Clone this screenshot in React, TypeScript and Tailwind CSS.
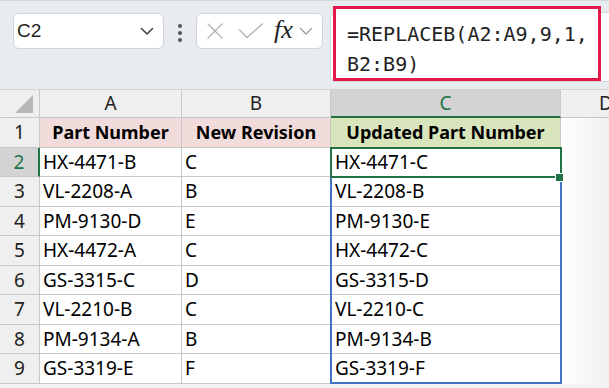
import React from "react";

const data: [string, string, string][] = [
  ["HX-4471-B", "C", "HX-4471-C"],
  ["VL-2208-A", "B", "VL-2208-B"],
  ["PM-9130-D", "E", "PM-9130-E"],
  ["HX-4472-A", "C", "HX-4472-C"],
  ["GS-3315-C", "D", "GS-3315-D"],
  ["VL-2210-B", "C", "VL-2210-C"],
  ["PM-9134-A", "B", "PM-9134-B"],
  ["GS-3319-E", "F", "GS-3319-F"],
];

const sheetFont = { fontFamily: '"Noto Sans", "Open Sans", sans-serif' };

export default function App() {
  return (
    <div className="w-[609px] h-[388px] overflow-hidden bg-[#f3f3f3] relative" style={sheetFont}>
      {/* Toolbar */}
      <div className="relative h-[90px] bg-[#e9ecef] border-t border-[#d6d9dc] border-b border-b-[#d4d4d4]">
        {/* Name box */}
        <div className="absolute left-[13px] top-[12px] w-[151px] h-[36px] bg-white border border-[#d3d5d8] rounded-[6px] flex items-center pl-[3px] pr-[8px]">
          <span className="text-[19px] text-[#1f1f1f] flex-1" style={{ fontFamily: '"Liberation Sans", Arial, sans-serif' }}>C2</span>
          <svg width="14" height="9" viewBox="0 0 14 9" className="mr-[1px]">
            <path d="M1.5 1.5 L7 7 L12.5 1.5" fill="none" stroke="#444" strokeWidth="1.6" strokeLinecap="round" strokeLinejoin="round" />
          </svg>
        </div>
        {/* dots */}
        <div className="absolute left-[178px] top-[23px] flex flex-col gap-[3px]">
          <div className="w-[4px] h-[4px] rounded-full bg-[#555]" />
          <div className="w-[4px] h-[4px] rounded-full bg-[#555]" />
          <div className="w-[4px] h-[4px] rounded-full bg-[#555]" />
        </div>
        {/* fx box */}
        <div className="absolute left-[196px] top-[12px] w-[127px] h-[36px] bg-white border border-[#d3d5d8] rounded-[6px] flex items-center">
          <svg width="18" height="18" viewBox="0 0 18 18" className="ml-[9px]">
            <path d="M2 2 L16 16 M16 2 L2 16" stroke="#b4b4b4" strokeWidth="1.4" strokeLinecap="round" />
          </svg>
          <svg width="26" height="18" viewBox="0 0 26 18" className="ml-[14px]">
            <path d="M1.5 8 L9 15.5 L24.5 2" fill="none" stroke="#b4b4b4" strokeWidth="1.4" strokeLinecap="round" strokeLinejoin="round" />
          </svg>
          <span className="ml-[10px] text-[26px] leading-none italic text-[#222] -mt-[2px]" style={{ fontFamily: '"Liberation Serif", "Times New Roman", serif' }}>fx</span>
          <svg width="14" height="9" viewBox="0 0 14 9" className="ml-[6px]">
            <path d="M1.5 1.5 L7 7 L12.5 1.5" fill="none" stroke="#9a9a9a" strokeWidth="1.3" strokeLinecap="round" strokeLinejoin="round" />
          </svg>
        </div>
        {/* formula box */}
        <div className="absolute left-[330px] top-[11px] w-[290px] h-[70px] bg-white border border-[#d3d5d8] rounded-[6px]" />
        <div
          className="absolute left-[333px] top-[5px] w-[268px] h-[75px] bg-white border-[3px] border-[#e2194a] pl-[11px] pt-[10px] text-[20px] leading-[30px] text-[#222]"
          style={{ fontFamily: '"DejaVu Sans Mono", "Liberation Mono", monospace' }}
        >
          <div>=REPLACEB(A2:A9,9,1,</div>
          <div>B2:B9)</div>
        </div>
      </div>

      {/* Grid */}
      <div className="relative">
        {/* header row */}
        <div className="flex h-[28px] text-[19px] text-[#222]">
          <div className="w-[40px] shrink-0 bg-[#efefef] border-r border-b border-[#c8c8c8] relative">
            <svg width="20" height="20" viewBox="0 0 20 20" className="absolute right-[5px] bottom-[3px]">
              <path d="M19 1 L19 19 L1 19 Z" fill="#b7b7b7" />
            </svg>
          </div>
          <div className="w-[142px] shrink-0 bg-[#efefef] border-r border-b border-[#c8c8c8] flex items-center justify-center">A</div>
          <div className="w-[149px] shrink-0 bg-[#efefef] border-r border-b border-[#c8c8c8] flex items-center justify-center">B</div>
          <div className="w-[230px] shrink-0 bg-[#d3d3d3] border-r border-[#c8c8c8] border-b-2 border-b-[#217346] flex items-center justify-center text-[#217346]">C</div>
          <div className="flex-1 bg-[#efefef] border-b border-[#c8c8c8] flex items-center pl-[38px]">D</div>
        </div>
        {/* row 1 */}
        <div className="flex h-[29.5px] text-[18px]">
          <div className="w-[40px] shrink-0 bg-[#efefef] border-r border-b border-[#c8c8c8] flex items-center justify-center text-[19px] text-[#222]">1</div>
          <div className="w-[142px] shrink-0 bg-[#f2dcdb] border-r border-b border-[#c8c8c8] flex items-center justify-center font-bold text-black">Part Number</div>
          <div className="w-[149px] shrink-0 bg-[#f2dcdb] border-r border-b border-[#c8c8c8] flex items-center justify-center font-bold text-black">New Revision</div>
          <div className="w-[230px] shrink-0 bg-[#d8e4bc] border-r border-b border-[#c8c8c8] flex items-center justify-center font-bold text-black">Updated Part Number</div>
          <div className="flex-1 bg-gradient-to-r from-white to-[#f1f1f1]" />
        </div>
        {data.map((r, i) => {
          const sel = i === 0;
          return (
            <div key={i} className="flex h-[29.5px] text-[19px] text-black">
              <div
                className={
                  sel
                    ? "w-[40px] shrink-0 bg-[#d3d3d3] border-r-2 border-r-[#217346] border-b border-[#c8c8c8] flex items-center justify-center text-[19px] text-[#217346]"
                    : "w-[40px] shrink-0 bg-[#efefef] border-r border-b border-[#c8c8c8] flex items-center justify-center text-[19px] text-[#222]"
                }
              >
                {i + 2}
              </div>
              <div className="w-[142px] shrink-0 bg-white border-r border-b border-[#c8c8c8] flex items-center pl-[3px]">{r[0]}</div>
              <div className="w-[149px] shrink-0 bg-white border-r border-b border-[#c8c8c8] flex items-center pl-[3px]">{r[1]}</div>
              <div className="w-[230px] shrink-0 bg-white border-r border-b border-[#c8c8c8] flex items-center pl-[4px]">{r[2]}</div>
              <div className="flex-1 bg-gradient-to-r from-white to-[#f1f1f1]" />
            </div>
          );
        })}
        {/* blue range outline */}
        <div className="absolute left-[330px] top-[57px] w-[232px] h-[237px] border-2 border-[#4472c4] pointer-events-none" />
        {/* green active cell */}
        <div className="absolute left-[330px] top-[57px] w-[232px] h-[31px] border-2 border-[#217346] pointer-events-none" />
        <div className="absolute left-[555px] top-[83px] w-[9px] h-[9px] bg-[#217346] border border-white pointer-events-none" />
      </div>
    </div>
  );
}
